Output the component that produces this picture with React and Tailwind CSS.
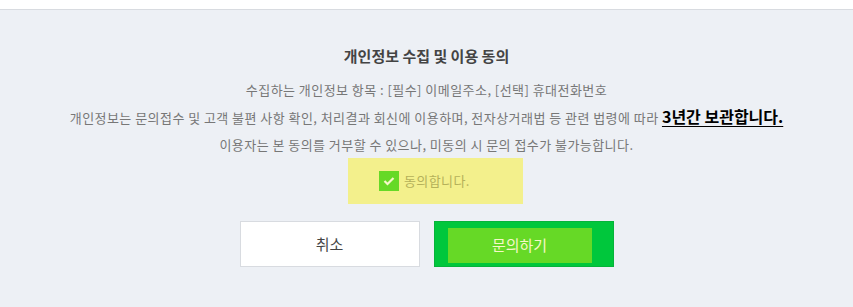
import React from 'react';

export default function App() {
  return (
    <div
      className="w-[853px] h-[307px] bg-[#edf0f5] overflow-hidden"
      style={{ fontFamily: '"Noto Sans CJK KR", "Noto Sans", sans-serif' }}
    >
      <div className="h-[10px] bg-white border-b border-[#d8dbe0]" />
      <div className="flex flex-col items-center pt-[34px]">
        <h2 className="text-[15px] font-bold text-[#444] leading-[24px]">개인정보 수집 및 이용 동의</h2>
        <div className="mt-[8px] text-[13px] text-[#777] leading-[27px] text-center tracking-[0.45px]">
          <p>수집하는 개인정보 항목 : [필수] 이메일주소, [선택] 휴대전화번호</p>
          <p>
            개인정보는 문의접수 및 고객 불편 사항 확인, 처리결과 회신에 이용하며, 전자상거래법 등 관련 법령에 따라{' '}
            <b className="text-[16px] text-black underline underline-offset-[3px] tracking-[0px]">3년간 보관합니다.</b>
          </p>
          <p>이용자는 본 동의를 거부할 수 있으나, 미동의 시 문의 접수가 불가능합니다.</p>
        </div>
        <label className="ml-[18px] w-[175px] h-[46px] bg-[#f3f08c] flex items-center pl-[31px] gap-[5px] cursor-pointer">
          <span className="w-[20px] h-[20px] bg-[#66d926] flex items-center justify-center">
            <svg width="12" height="10" viewBox="0 0 12 10" fill="none">
              <path d="M1.5 5 L4.5 8 L10.5 2" stroke="#f6f7c8" strokeWidth="2.2" />
            </svg>
          </span>
          <span className="text-[13px] text-[#b5b15a] tracking-[0.4px]">동의합니다.</span>
        </label>
        <div className="mt-[17px] flex gap-[14px]">
          <button className="w-[180px] h-[46px] bg-white border border-[#d8dbe0] text-[15px] text-[#444]">취소</button>
          <button className="w-[180px] h-[46px] bg-[#00c73c] border border-[#06b33a] pl-[13px] pt-[6px] flex items-start">
            <span className="w-[144px] h-[35px] bg-[#66d926] flex items-center justify-center text-[15px] text-[#f6f7c8]">문의하기</span>
          </button>
        </div>
      </div>
    </div>
  );
}
